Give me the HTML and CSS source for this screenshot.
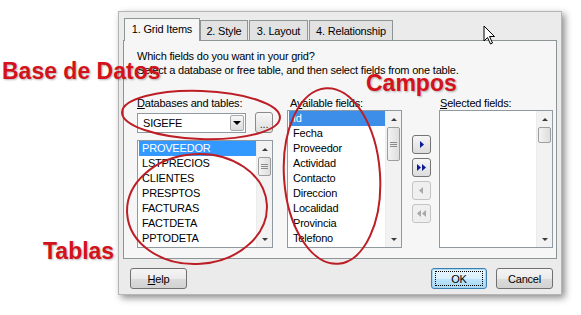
FILE: index.html
```html
<!DOCTYPE html>
<html lang="en">
<head>
    <meta charset="UTF-8">
    <title>Grid Builder</title>
    <link rel="stylesheet" href="styles.css">
</head>
<body>
    <div class="dialog">
        <div class="tabs">
            <div class="tab tab-1 active">1. Grid Items</div>
            <div class="tab tab-2">2. Style</div>
            <div class="tab tab-3">3. Layout</div>
            <div class="tab tab-4">4. Relationship</div>
        </div>
        <div class="panel">
            <p class="intro">Which fields do you want in your grid?<br>Select a database or free table, and then select fields from one table.</p>
            <div class="columns">
                <div class="col col-db">
                    <div class="label"><u>D</u>atabases and tables:</div>
                    <div class="combo-row">
                        <div class="combo">SIGEFE<span class="drop"><i class="arr-down big"></i></span></div>
                        <div class="dots">...</div>
                    </div>
                    <div class="listbox list-tables">
                        <div class="items">
                            <div class="item selected">PROVEEDOR</div>
                            <div class="item">LSTPRECIOS</div>
                            <div class="item">CLIENTES</div>
                            <div class="item">PRESPTOS</div>
                            <div class="item">FACTURAS</div>
                            <div class="item">FACTDETA</div>
                            <div class="item">PPTODETA</div>
                        </div>
                        <div class="sb">
                            <div class="sb-btn"><i class="arr-up"></i></div>
                            <div class="thumb thumb-md"></div>
                            <div class="track"></div>
                            <div class="sb-btn"><i class="arr-down"></i></div>
                        </div>
                    </div>
                </div>
                <div class="col col-avail">
                    <div class="label">A<u>v</u>ailable fields:</div>
                    <div class="listbox list-fields">
                        <div class="items">
                            <div class="item selected">Id</div>
                            <div class="item">Fecha</div>
                            <div class="item">Proveedor</div>
                            <div class="item">Actividad</div>
                            <div class="item">Contacto</div>
                            <div class="item">Direccion</div>
                            <div class="item">Localidad</div>
                            <div class="item">Provincia</div>
                            <div class="item">Telefono</div>
                        </div>
                        <div class="sb">
                            <div class="sb-btn"><i class="arr-up"></i></div>
                            <div class="thumb thumb-lg"></div>
                            <div class="track"></div>
                            <div class="sb-btn"><i class="arr-down"></i></div>
                        </div>
                    </div>
                </div>
                <div class="movers">
                    <div class="mover">
                        <svg width="17" height="17" viewBox="0 0 17 17"><polygon points="7,5 11,8.5 7,12" fill="#0c1a96"/></svg>
                    </div>
                    <div class="mover">
                        <svg width="17" height="17" viewBox="0 0 17 17"><polygon points="4,5 8,8.5 4,12" fill="#0c1a96"/><polygon points="9,5 13,8.5 9,12" fill="#0c1a96"/></svg>
                    </div>
                    <div class="mover disabled">
                        <svg width="17" height="17" viewBox="0 0 17 17"><polygon points="10,5 6,8.5 10,12" fill="#a8a8a8"/></svg>
                    </div>
                    <div class="mover disabled">
                        <svg width="17" height="17" viewBox="0 0 17 17"><polygon points="8,5 4,8.5 8,12" fill="#a8a8a8"/><polygon points="13,5 9,8.5 13,12" fill="#a8a8a8"/></svg>
                    </div>
                </div>
                <div class="col col-sel">
                    <div class="label"><u>S</u>elected fields:</div>
                    <div class="listbox list-selected">
                        <div class="items"></div>
                        <div class="sb">
                            <div class="sb-btn"><i class="arr-up"></i></div>
                            <div class="thumb thumb-sm"></div>
                            <div class="track"></div>
                            <div class="sb-btn"><i class="arr-down"></i></div>
                        </div>
                    </div>
                </div>
            </div>
        </div>
        <div class="footer">
            <div class="btn btn-help"><u>H</u>elp</div>
            <div class="spacer"></div>
            <div class="btn btn-ok"><span class="focus">OK</span></div>
            <div class="btn btn-cancel">Cancel</div>
        </div>
    </div>

    <!-- hand drawn annotations on top of the screenshot -->
    <svg class="marks" width="581" height="315" viewBox="0 0 581 315">
        <ellipse cx="201" cy="115" rx="79" ry="24" transform="rotate(2 201 115)"/>
        <ellipse cx="197" cy="209" rx="70" ry="55" transform="rotate(-4 197 209)"/>
        <ellipse cx="332" cy="176" rx="48" ry="88" transform="rotate(-4 332 176)"/>
    </svg>
    <div class="note note-db">Base de Datos</div>
    <div class="note note-campos">Campos</div>
    <div class="note note-tablas">Tablas</div>

    <svg class="cursor" width="14" height="21" viewBox="0 0 14 21">
        <path d="M1 1 L1 16 L4.5 12.5 L7.5 19 L9.5 18 L6.5 11.5 L11.5 11.5 Z" fill="#fff" stroke="#000" stroke-width="1" stroke-linejoin="round"/>
    </svg>
</body>
</html>
```

FILE: styles.css
```css
* {
    box-sizing: border-box;
}
body {
    margin: 0;
    width: 581px;
    height: 315px;
    overflow: hidden;
    position: relative;
    background: #fff;
    font-family: "Liberation Sans", Arial, sans-serif;
    font-size: 11px;
    color: #000;
}
.dialog {
    margin: 11px 0 0 118px;
    width: 444px;
    height: 284px;
    background: #ebebeb;
    border: 1px solid #b5b5b5;
    box-shadow: 3px 3px 7px rgba(0, 0, 0, 0.45);
    padding: 6px 4px 0;
    letter-spacing: -0.2px;
}
.tabs {
    display: flex;
    align-items: flex-end;
    height: 22px;
    padding-left: 1px;
    position: relative;
    z-index: 1;
}
.tab {
    height: 20px;
    display: flex;
    align-items: center;
    justify-content: center;
    border: 1px solid #8e9597;
    border-bottom: none;
    background: #e2e2e2;
    margin-right: 1px;
    padding-top: 1px;
}
.tab.active {
    height: 23px;
    margin-bottom: -1px;
    margin-right: 0;
    background: #f6f6f6;
    padding-top: 0;
    padding-bottom: 3px;
}
.tab-1 { width: 76px; }
.tab-2 { width: 48px; }
.tab-3 { width: 59px; }
.tab-4 { width: 84px; }
.panel {
    height: 219px;
    border: 1px solid #8e9597;
    background: #f6f6f6;
    padding: 8px 3px 0 13px;
}
.intro {
    margin: 0;
    line-height: 14px;
}
.columns {
    display: flex;
    margin-top: 19px;
}
.label {
    line-height: 14px;
    height: 14px;
}
.col-db {
    width: 136px;
}
.col-avail {
    width: 115px;
    margin-left: 14px;
}
.col-avail .label {
    padding-left: 3px;
}
.col-sel {
    width: 114px;
    margin-left: 8px;
}
.col-sel .label {
    padding-left: 1px;
}
.combo-row {
    display: flex;
    align-items: center;
    height: 21px;
    margin-top: 2px;
}
.combo {
    width: 109px;
    height: 20px;
    border: 1px solid #8f9aa0;
    background: #fff;
    display: flex;
    align-items: center;
    padding-left: 5px;
    position: relative;
}
.drop {
    position: absolute;
    right: 1px;
    top: 1px;
    width: 14px;
    height: 16px;
    border: 1px solid #a9a9a9;
    border-radius: 2px;
    background: linear-gradient(#f7f7f7, #dcdcdc);
    display: flex;
    align-items: center;
    justify-content: center;
}
.dots {
    width: 18px;
    height: 21px;
    margin-left: 9px;
    border: 1px solid #8a8a8a;
    border-radius: 3px;
    background: linear-gradient(#f7f7f7, #dedede);
    display: flex;
    align-items: flex-end;
    justify-content: center;
    padding-bottom: 4px;
    line-height: 8px;
    color: #333;
}
.listbox {
    display: flex;
    border: 1px solid #8f9aa0;
    background: #fff;
}
.list-tables {
    height: 108px;
    margin-top: 7px;
}
.list-fields,
.list-selected {
    height: 138px;
}
.items {
    flex: 1;
    overflow: hidden;
}
.item {
    height: 15px;
    line-height: 15px;
    padding-left: 3px;
    margin-left: 1px;
    white-space: nowrap;
}
.list-fields .item {
    padding-left: 4px;
}
.item.selected {
    background: #3399ff;
    color: #fff;
}
.list-fields .item.selected {
    background: #3d8ee8;
}
.sb {
    width: 16px;
    display: flex;
    flex-direction: column;
    background: #f2f2f2;
    border-left: 1px solid #ececec;
}
.sb-btn {
    height: 16px;
    display: flex;
    align-items: center;
    justify-content: center;
}
.track {
    flex: 1;
}
.thumb {
    margin: 0 1px;
    border: 1px solid #9d9d9d;
    border-radius: 2px;
    background: linear-gradient(90deg, #f3f3f3, #dedede);
    display: flex;
    align-items: center;
    justify-content: center;
}
.thumb-sm { height: 16px; }
.thumb-md { height: 19px; }
.thumb-lg { height: 34px; }
.thumb-md::after,
.thumb-lg::after {
    content: "";
    width: 7px;
    height: 5px;
    background: repeating-linear-gradient(#8a8a8a 0 1px, transparent 1px 2px);
}
.arr-up,
.arr-down {
    width: 0;
    height: 0;
    border-left: 3px solid transparent;
    border-right: 3px solid transparent;
}
.arr-up {
    border-bottom: 3px solid #3a3a3a;
}
.arr-down {
    border-top: 3px solid #3a3a3a;
}
.arr-down.big {
    border-left-width: 4px;
    border-right-width: 4px;
    border-top: 4px solid #000;
}
.movers {
    margin-left: 10px;
    padding-top: 39px;
    display: flex;
    flex-direction: column;
    gap: 4px;
}
.mover {
    width: 19px;
    height: 19px;
    border: 1px solid #747474;
    border-radius: 3px;
    background: linear-gradient(#f6f6f6, #dcdcdc);
    display: flex;
    align-items: center;
    justify-content: center;
}
.mover.disabled {
    border-color: #c4c4c4;
    background: #efefef;
}
.footer {
    display: flex;
    align-items: flex-start;
    padding: 9px 4px 0 7px;
}
.spacer {
    flex: 1;
}
.btn {
    height: 21px;
    border: 1px solid #707070;
    border-radius: 3px;
    background: linear-gradient(#f4f4f4 0%, #ebebeb 50%, #dcdcdc 51%, #d2d2d2 100%);
    display: flex;
    align-items: center;
    justify-content: center;
}
.btn-help { width: 57px; }
.btn-ok {
    width: 56px;
    border-color: #3c7fb1;
    box-shadow: inset 0 0 0 1px #a9d6f2;
    background: linear-gradient(#eaf6fd 0%, #d9f0fc 50%, #bee6fd 51%, #a7d9f5 100%);
}
.btn-cancel {
    width: 57px;
    margin-left: 9px;
}
.focus {
    border: 1px dotted #000;
    width: 48px;
    height: 15px;
    display: flex;
    align-items: center;
    justify-content: center;
}
.marks {
    position: absolute;
    left: 0;
    top: 0;
    pointer-events: none;
}
.marks ellipse {
    fill: none;
    stroke: #bd1e26;
    stroke-width: 2;
}
.note {
    position: absolute;
    font-family: "Liberation Sans", Arial, sans-serif;
    font-weight: bold;
    font-size: 23px;
    line-height: 23px;
    color: #d4121b;
    text-shadow: 1px 1px 2px rgba(0, 0, 0, 0.3);
    white-space: nowrap;
}
.note-db { left: 2px; top: 60px; }
.note-campos { left: 366px; top: 72px; }
.note-tablas { left: 43px; top: 240px; }
.cursor {
    position: absolute;
    left: 483px;
    top: 25px;
}
```
